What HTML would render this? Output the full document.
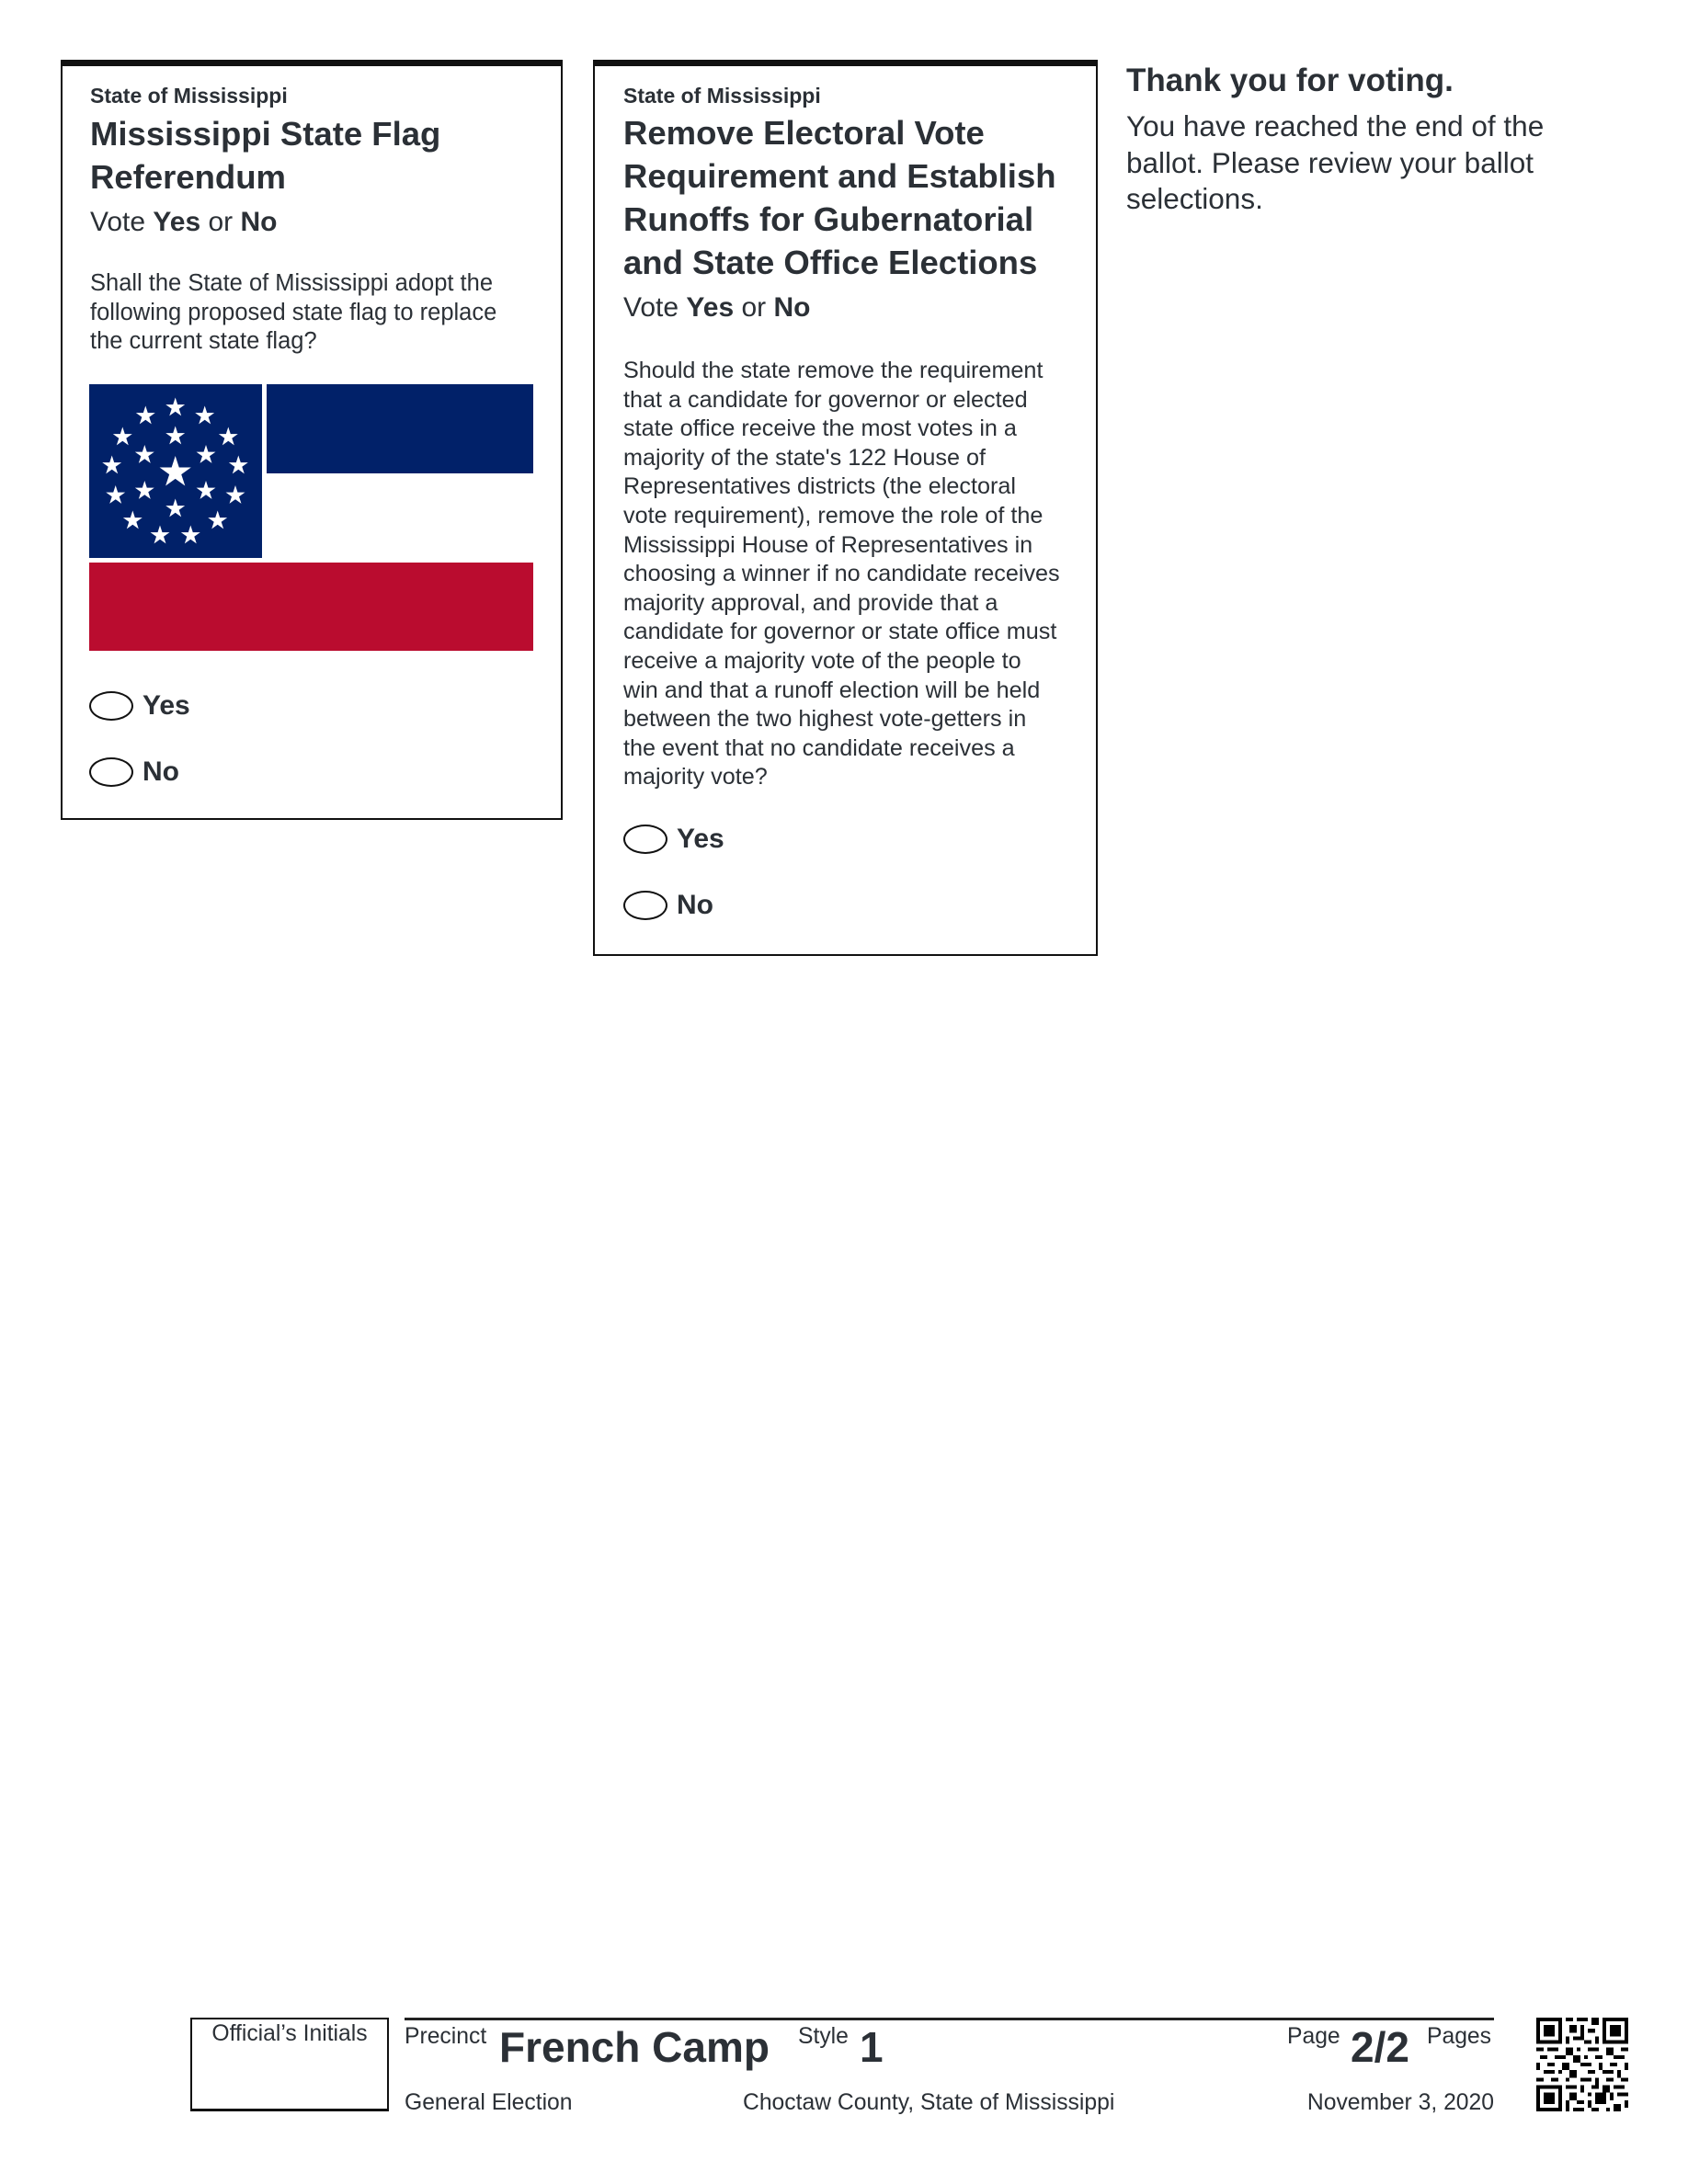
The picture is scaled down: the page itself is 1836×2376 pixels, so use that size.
<!DOCTYPE html>
<html><head><meta charset="utf-8">
<style>
html,body{margin:0;padding:0;background:#fff;}
body{width:1836px;height:2376px;position:relative;overflow:hidden;font-family:"Liberation Sans",Arial,sans-serif;color:#2b3036;}
.a{position:absolute;white-space:nowrap;}
.card{position:absolute;box-sizing:border-box;border:2px solid #111;border-top:7px solid #111;}
.st{font-size:23px;line-height:28px;font-weight:bold;}
.tt{font-size:36.5px;line-height:47px;font-weight:bold;}
.vt{font-size:30px;line-height:36px;}
.bd{font-size:25.5px;line-height:31.6px;}
.bd2{font-size:25.2px;line-height:31.6px;}
.op{font-size:30px;line-height:36px;font-weight:bold;}
.ov{position:absolute;width:44px;height:28px;border:2px solid #111;border-radius:50%;}
.sm{font-size:24.7px;line-height:28px;}
.big{font-size:46px;line-height:52px;font-weight:bold;}
</style></head><body>

<div class="card" style="left:66px;top:65px;width:546px;height:827px;"></div>
<div class="a st" style="left:98px;top:90px;">State of Mississippi</div>
<div class="a tt" style="left:98px;top:122px;">Mississippi State Flag<br>Referendum</div>
<div class="a vt" style="left:98px;top:224px;">Vote <b>Yes</b> or <b>No</b></div>
<div class="a bd" style="left:98px;top:293px;">Shall the State of Mississippi adopt the<br>following proposed state flag to replace<br>the current state flag?</div>

<svg class="a" style="left:97px;top:418px;" width="483" height="290" viewBox="97 418 483 290">
<defs><polygon id="s" points="0,-1 0.225,-0.309 0.951,-0.309 0.363,0.118 0.588,0.809 0,0.382 -0.588,0.809 -0.363,0.118 -0.951,-0.309 -0.225,-0.309" fill="#fff"/></defs>
<rect x="97" y="418" width="188" height="189" fill="#012169"/>
<rect x="290" y="418" width="290" height="97" fill="#012169"/>
<rect x="97" y="612" width="483" height="96" fill="#ba0c2f"/>
<use href="#s" transform="translate(190.7,514) scale(18)"/>
<g>
<use href="#s" transform="translate(190.7,443.5) scale(11)"/>
<use href="#s" transform="translate(158.3,452.5) scale(11)"/>
<use href="#s" transform="translate(222.7,452.5) scale(11)"/>
<use href="#s" transform="translate(133.3,475.5) scale(11)"/>
<use href="#s" transform="translate(248.3,475.5) scale(11)"/>
<use href="#s" transform="translate(121.7,506.5) scale(11)"/>
<use href="#s" transform="translate(259.3,506.5) scale(11)"/>
<use href="#s" transform="translate(125.7,539) scale(11)"/>
<use href="#s" transform="translate(256,539) scale(11)"/>
<use href="#s" transform="translate(144.3,566.5) scale(11)"/>
<use href="#s" transform="translate(236.7,566.5) scale(11)"/>
<use href="#s" transform="translate(174,582.5) scale(11)"/>
<use href="#s" transform="translate(207.3,582.5) scale(11)"/>
<use href="#s" transform="translate(190.7,474.5) scale(11)"/>
<use href="#s" transform="translate(157.3,495) scale(11)"/>
<use href="#s" transform="translate(224,495) scale(11)"/>
<use href="#s" transform="translate(157.3,534) scale(11)"/>
<use href="#s" transform="translate(224,534) scale(11)"/>
<use href="#s" transform="translate(190.7,553.5) scale(11)"/>
</g>
</svg>

<div class="ov" style="left:97px;top:752px;"></div>
<div class="a op" style="left:155px;top:750px;">Yes</div>
<div class="ov" style="left:97px;top:824px;"></div>
<div class="a op" style="left:155px;top:822px;">No</div>

<div class="card" style="left:645px;top:65px;width:549px;height:975px;"></div>
<div class="a st" style="left:678px;top:90px;">State of Mississippi</div>
<div class="a tt" style="left:678px;top:121px;">Remove Electoral Vote<br>Requirement and Establish<br>Runoffs for Gubernatorial<br>and State Office Elections</div>
<div class="a vt" style="left:678px;top:317px;">Vote <b>Yes</b> or <b>No</b></div>
<div class="a bd2" style="left:678px;top:388px;">Should the state remove the requirement<br>that a candidate for governor or elected<br>state office receive the most votes in a<br>majority of the state's 122 House of<br>Representatives districts (the electoral<br>vote requirement), remove the role of the<br>Mississippi House of Representatives in<br>choosing a winner if no candidate receives<br>majority approval, and provide that a<br>candidate for governor or state office must<br>receive a majority vote of the people to<br>win and that a runoff election will be held<br>between the two highest vote-getters in<br>the event that no candidate receives a<br>majority vote?</div>
<div class="ov" style="left:678px;top:897px;"></div>
<div class="a op" style="left:736px;top:895px;">Yes</div>
<div class="ov" style="left:678px;top:969px;"></div>
<div class="a op" style="left:736px;top:967px;">No</div>

<div class="a" style="left:1225px;top:68px;font-size:35px;line-height:40px;font-weight:bold;">Thank you for voting.</div>
<div class="a" style="left:1225px;top:118px;font-size:31.5px;line-height:39.5px;">You have reached the end of the<br>ballot. Please review your ballot<br>selections.</div>

<!-- footer -->
<div style="position:absolute;left:207px;top:2195px;width:216px;height:102px;box-sizing:border-box;border:2px solid #111;border-bottom:3px solid #111;"></div>
<div class="a sm" style="left:207px;width:216px;text-align:center;top:2199px;">Official’s Initials</div>
<div style="position:absolute;left:440px;top:2195px;width:1185px;height:3px;background:#222;"></div>
<div class="a sm" style="left:440px;top:2202px;">Precinct</div>
<div class="a big" style="left:543px;top:2201px;">French Camp</div>
<div class="a sm" style="left:868px;top:2202px;">Style</div>
<div class="a big" style="left:935px;top:2201px;">1</div>
<div class="a sm" style="left:1400px;top:2202px;">Page</div>
<div class="a big" style="left:1469px;top:2201px;">2/2</div>
<div class="a sm" style="left:1552px;top:2202px;">Pages</div>
<div class="a sm" style="left:440px;top:2274px;">General Election</div>
<div class="a sm" style="left:808px;top:2274px;">Choctaw County, State of Mississippi</div>
<div class="a sm" style="right:211px;top:2274px;">November 3, 2020</div>

<svg class="a" style="left:1671px;top:2195px;" width="100" height="102" viewBox="0 0 25 25" shape-rendering="crispEdges" preserveAspectRatio="none">
<g fill="#000">
<rect x="0" y="0" width="7" height="7"/><rect x="1" y="1" width="5" height="5" fill="#fff"/><rect x="2" y="2" width="3" height="3"/>
<rect x="18" y="0" width="7" height="7"/><rect x="19" y="1" width="5" height="5" fill="#fff"/><rect x="20" y="2" width="3" height="3"/>
<rect x="0" y="18" width="7" height="7"/><rect x="1" y="19" width="5" height="5" fill="#fff"/><rect x="2" y="20" width="3" height="3"/>
<path d="M8 0h2v1h-2zM11 0h3v1h-3zM15 0h2v2h-2zM9 2h2v2h-2zM12 2h1v3h-1zM14 3h2v1h-2zM8 5h1v2h-1zM10 5h3v1h-3zM16 5h1v2h-1zM13 6h2v1h-2z
M0 8h2v1h-2zM3 8h3v1h-3zM8 8h2v2h-2zM11 8h1v1h-1zM14 8h3v1h-3zM19 8h2v2h-2zM23 8h2v1h-2z
M1 10h2v1h-2zM5 10h3v1h-3zM10 10h2v2h-2zM13 10h1v1h-1zM16 10h2v1h-2zM21 10h3v1h-3z
M0 12h1v2h-1zM3 12h2v1h-2zM7 12h2v2h-2zM12 12h3v1h-3zM17 12h1v2h-1zM20 12h2v1h-2zM24 12h1v2h-1z
M2 14h3v1h-3zM6 14h1v1h-1zM9 14h2v2h-2zM14 14h2v1h-2zM18 14h3v1h-3zM22 14h1v2h-1z
M0 16h2v1h-2zM4 16h2v1h-2zM8 16h1v1h-1zM12 16h3v1h-3zM16 16h1v2h-1zM19 16h2v1h-2zM23 16h2v1h-2z
M8 18h3v1h-3zM12 18h1v2h-1zM15 18h2v1h-2zM18 18h2v2h-2zM21 18h3v1h-3z
M9 20h2v2h-2zM14 20h1v1h-1zM16 20h3v3h-3zM20 20h1v2h-1zM22 20h3v1h-3z
M8 22h1v3h-1zM11 22h2v1h-2zM14 22h1v2h-1zM21 23h2v2h-2zM24 22h1v2h-1zM10 24h3v1h-3zM15 24h2v1h-2zM19 24h1v1h-1z"/>
</g>
</svg>

</body></html>
